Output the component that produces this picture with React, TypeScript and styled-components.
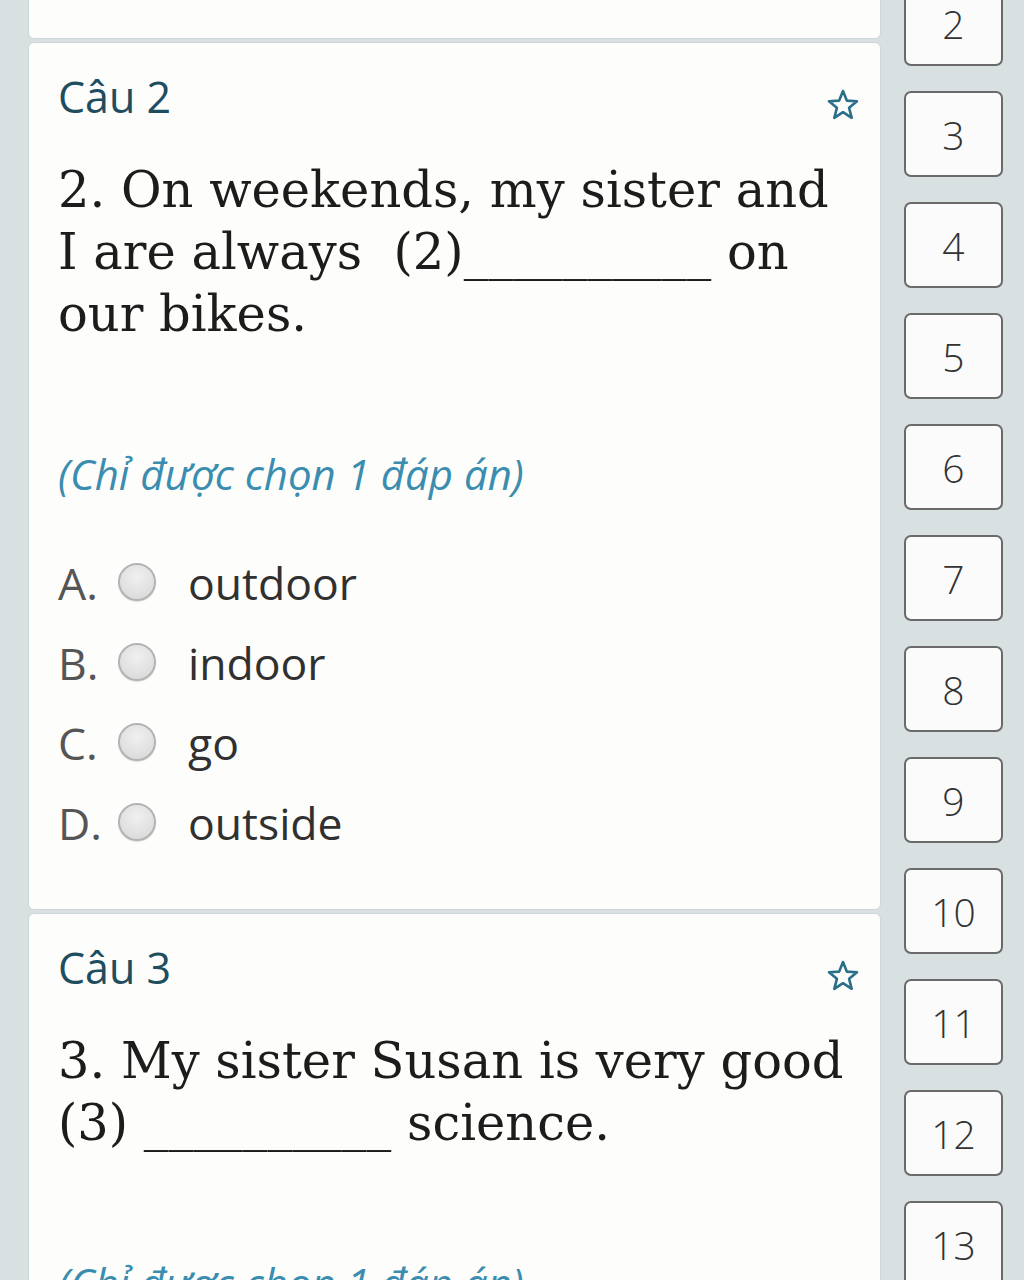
import React from 'react';
import styled, { createGlobalStyle } from 'styled-components';

const GlobalStyle = createGlobalStyle`
  html, body {
    margin: 0;
    padding: 0;
    background: #d9e0e2;
  }
`;

const Page = styled.div`
  display: flex;
  flex-direction: row;
  align-items: flex-start;
  height: 1280px;
  overflow: hidden;
  background: #d9e0e2;
`;

const CardList = styled.div`
  display: flex;
  flex-direction: column;
  gap: 3px;
  width: 853px;
  margin-top: -40px;
  padding-left: 28px;
  padding-right: 3px;
`;

const Card = styled.div<{ $stub?: boolean }>`
  display: flex;
  flex-direction: column;
  background: #fdfdfb;
  border: 1px solid #cdd6d8;
  border-radius: 6px;
  padding: 29px 19px 47px 29px;
  height: ${(p) => (p.$stub ? '79px' : 'auto')};
  box-sizing: border-box;
`;

const Header = styled.div`
  display: flex;
  flex-direction: row;
  justify-content: space-between;
  align-items: flex-start;
`;

const Title = styled.span`
  font-family: 'Open Sans', sans-serif;
  font-size: 43px;
  font-weight: 500;
  line-height: 50px;
  color: #1f4d60;
`;

const StarIcon = styled.svg`
  width: 36px;
  height: 36px;
  margin-top: 15px;
`;

const Question = styled.p`
  font-family: 'DejaVu Serif', serif;
  font-size: 49.5px;
  line-height: 62px;
  color: #1c1c1c;
  margin: 36px 0 0 0;
  max-width: 800px;
`;

const Hint = styled.p`
  font-family: 'Open Sans', sans-serif;
  font-style: italic;
  font-size: 42px;
  line-height: 50px;
  color: #3b8db0;
  margin: 104px 0 0 0;
`;

const Options = styled.div`
  display: flex;
  flex-direction: column;
  margin-top: 43px;
`;

const OptionRow = styled.label`
  display: flex;
  flex-direction: row;
  align-items: center;
  height: 80px;
  font-family: 'Open Sans', sans-serif;
  font-size: 44.5px;
`;

const Letter = styled.span`
  width: 60px;
  color: #555;
`;

const Radio = styled.span`
  width: 34px;
  height: 34px;
  border-radius: 50%;
  border: 2px solid #b3b3b3;
  background: radial-gradient(circle at 50% 35%, #f0f0f0 0%, #d6d6d6 100%);
  box-shadow: 0 1px 1px rgba(0, 0, 0, 0.12);
  margin-right: 32px;
`;

const OptionText = styled.span`
  color: #303030;
`;

const Sidebar = styled.div`
  display: flex;
  flex-direction: column;
  gap: 25px;
  margin-top: -20px;
  padding-left: 20px;
`;

const NumBox = styled.div`
  width: 99px;
  height: 86px;
  box-sizing: border-box;
  border: 2px solid #6a6a6a;
  border-radius: 7px;
  background: #fbfbfb;
  display: flex;
  align-items: center;
  justify-content: center;
  font-family: 'Open Sans', sans-serif;
  font-weight: 300;
  font-size: 39px;
  color: #333;
`;

const Star = () => (
  <StarIcon viewBox="0 0 36 36">
    <polygon
      points="18,4 21.8,13.6 32,14.2 24.1,20.8 26.7,30.8 18,25.2 9.3,30.8 11.9,20.8 4,14.2 14.2,13.6"
      fill="none"
      stroke="#2a6e8a"
      strokeWidth="2.6"
      strokeLinejoin="round"
    />
  </StarIcon>
);

const blank = '__________';

const App: React.FC = () => {
  const options = [
    { key: 'A.', text: 'outdoor' },
    { key: 'B.', text: 'indoor' },
    { key: 'C.', text: 'go' },
    { key: 'D.', text: 'outside' },
  ];
  const nums = [2, 3, 4, 5, 6, 7, 8, 9, 10, 11, 12, 13];

  return (
    <Page>
      <GlobalStyle />
      <CardList>
        <Card $stub />
        <Card>
          <Header>
            <Title>Câu 2</Title>
            <Star />
          </Header>
          <Question>
            2. On weekends, my sister and I are always&nbsp; (2){blank} on our bikes.
          </Question>
          <Hint>(Chỉ được chọn 1 đáp án)</Hint>
          <Options>
            {options.map((o) => (
              <OptionRow key={o.key}>
                <Letter>{o.key}</Letter>
                <Radio />
                <OptionText>{o.text}</OptionText>
              </OptionRow>
            ))}
          </Options>
        </Card>
        <Card>
          <Header>
            <Title>Câu 3</Title>
            <Star />
          </Header>
          <Question>
            3. My sister Susan is very good (3) {blank} science.
          </Question>
          <Hint>(Chỉ được chọn 1 đáp án)</Hint>
        </Card>
      </CardList>
      <Sidebar>
        {nums.map((n) => (
          <NumBox key={n}>{n}</NumBox>
        ))}
      </Sidebar>
    </Page>
  );
};

export default App;
